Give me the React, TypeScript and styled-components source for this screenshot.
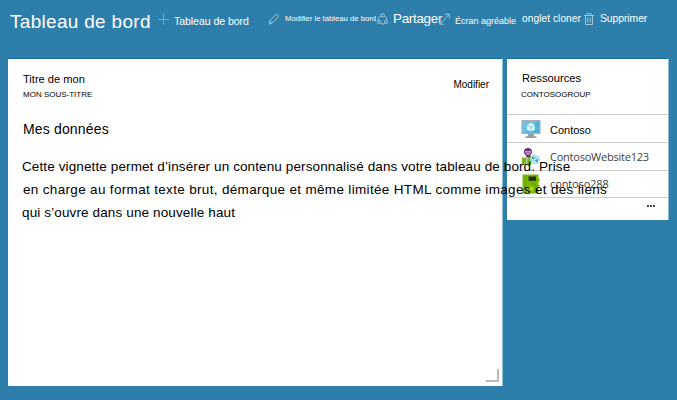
import React from "react";
import styled, { createGlobalStyle } from "styled-components";

const GlobalStyle = createGlobalStyle`
  * { box-sizing: border-box; }
  html, body { margin: 0; padding: 0; background: #2e7eab; }
  body { width: 677px; height: 400px; overflow: hidden; font-family: "Liberation Sans", Arial, sans-serif; }
`;

const Page = styled.main`
  width: 677px;
  height: 400px;
  background: #2e7eab;
`;

const Toolbar = styled.header`
  display: flex;
  align-items: flex-start;
  height: 58px;
  padding: 8px 0 0 10px;
  color: #fff;
`;

const Label = styled.span<{ $size: number; $track?: number }>`
  display: block;
  white-space: nowrap;
  font-size: ${(p) => p.$size}px;
  letter-spacing: ${(p) => p.$track ?? 0}px;
  line-height: 16px;
`;

const Title = styled.h1`
  flex: 0 0 148px;
  margin: 0;
  font-size: 19px;
  font-weight: 400;
  line-height: 27px;
  letter-spacing: 0.3px;
  white-space: nowrap;
`;

const Command = styled.div<{ $width: number; $top: number; $gap: number }>`
  display: flex;
  flex: 0 0 ${(p) => p.$width}px;
  min-width: 0;
  gap: ${(p) => p.$gap}px;
  align-items: flex-start;
  ${Label} { margin-top: ${(p) => p.$top}px; }
`;

const Glyph = styled.svg<{ $top?: number }>`
  display: block;
  flex: none;
  margin-top: ${(p) => p.$top ?? 5}px;
  fill: none;
  stroke: #9fc5da;
  stroke-width: 1;
`;

const Board = styled.div`
  display: grid;
  grid-template-columns: 495px 162px;
  column-gap: 4px;
  align-items: start;
  padding-left: 8px;
`;

const Tile = styled.section<{ $height: number }>`
  height: ${(p) => p.$height}px;
  background: #fff;
  color: #000;
  border-top: 1px solid #176c9f;
  border-right: 1px solid #8fbdd6;
`;

const MarkdownTile = styled(Tile)`
  position: relative;
  z-index: 1;
  padding: 12px 13px 0 14px;
`;

const TileHeader = styled.div`
  display: flex;
  justify-content: space-between;
  height: 44px;
`;

const EditLabel = styled(Label)`
  margin: 6px 0 0;
`;

const Heading = styled.h2`
  margin: 4px 0 0 1px;
  font-size: 14px;
  font-weight: 400;
  line-height: 20px;
  letter-spacing: 0.16px;
`;

const Copy = styled.div`
  margin-top: 16px;
`;

const Line = styled.div<{ $indent?: number; $track: number }>`
  padding-left: ${(p) => p.$indent ?? 0}px;
  height: 23px;
  font-size: 13.5px;
  line-height: 23px;
  letter-spacing: ${(p) => p.$track}px;
  white-space: nowrap;
`;

const Titles = styled.div`
  padding-left: 1px;
`;

const Grip = styled.span`
  position: absolute;
  right: 3px;
  bottom: 4px;
  width: 13px;
  height: 13px;
  border: solid #b9b9b9;
  border-width: 0 2px 2px 0;
`;

const ResourceHeader = styled.div`
  display: flex;
  flex-direction: column;
  gap: 1px;
  height: 55px;
  padding: 11px 0 0 14px;
`;

const ResourceTitle = styled(Label)`
  padding-left: 1px;
`;

const Resource = styled.div<{ $height: number }>`
  display: flex;
  align-items: center;
  gap: 8px;
  height: ${(p) => p.$height}px;
  padding-left: 14px;
  border-top: 1px solid #cdcdcd;
`;

const ResourceName = styled(Label)<{ $web?: boolean }>`
  margin-top: ${(p) => (p.$web ? 0 : 2)}px;
  padding-left: 1px;
  color: ${(p) => (p.$web ? "#404040" : "#000")};
  font-family: ${(p) => (p.$web ? '"Open Sans", "Noto Sans", sans-serif' : "inherit")};
`;

const More = styled.div`
  display: flex;
  justify-content: flex-end;
  gap: 1px;
  padding: 7px 13px 0 0;
  border-top: 1px solid #cdcdcd;
`;

const Dot = styled.i`
  width: 2px;
  height: 2px;
  background: #444;
`;

const MonitorIcon = () => (
  <svg width="20" height="20" viewBox="0 0 20 20">
    <rect x=".5" y="1" width="19" height="14" fill="#a8adb0" />
    <rect x="1.7" y="2.2" width="16.6" height="11.6" fill="#48b5dc" />
    <path d="M2 2h14L4 13.7H2z" fill="#69c4e4" />
    <path d="M10 3.7l4 2.2v4.5l-4 2.3-4-2.3V5.9z" fill="#e2f5fb" />
    <path d="M6 6l4 2.3L14 6M10 8.3v4.2" stroke="#55b9dc" fill="none" strokeWidth=".7" />
    <path d="M7 15h6v2.2h2.5V19h-11v-1.8H7z" fill="#979da1" />
  </svg>
);

const WebIcon = () => (
  <svg width="20" height="20" viewBox="0 0 20 20">
    <path d="M1 10.5h4.5V18H1zM6.2 8.5h4V18h-4z" fill="#76b51b" />
    <path d="M4.6 8C1.6 5.6 3 1 7 1s5.4 4.6 2.4 7l-.9 2h-3z" fill="#68217a" />
    <path d="M6.2 8V6.2C4 6.4 4 3.6 5.7 4L7 5.4 8.3 4c1.7-.4 1.7 2.4-.5 2.2V8" stroke="#fff" fill="none" strokeWidth=".8" />
    <circle cx="14" cy="12.3" r="4.8" fill="#8ccfe8" />
    <path d="M10.5 11l5-2.5 2 5.5-4.5 2-2.5-5 7 3" stroke="#fff" strokeWidth=".9" fill="none" />
    <circle cx="12" cy="11" r="1.2" fill="#3999c6" />
    <circle cx="15.8" cy="13.6" r="1.3" fill="#3999c6" />
  </svg>
);

const BoardIcon = () => (
  <svg width="20" height="20" viewBox="0 0 20 20">
    <path d="M1.5 .5h16v4.3h1v3h-1v3h1v3h-1v5.7h-16z" fill="#78b800" />
    <rect x="7.5" y="2.5" width="7.5" height="4.3" fill="#24331b" />
    <path d="M4.5 3v14M11 7v3h3.5v6" stroke="#5d9f06" strokeWidth=".8" fill="none" />
    <rect x="8" y="13" width="4" height="3.5" fill="#b8d432" />
  </svg>
);

export default function App() {
  return (
    <>
      <GlobalStyle />
      <Page>
        <Toolbar>
          <Title>Tableau de bord</Title>
          <Command $width={110} $top={5} $gap={5}>
            <Glyph width="11" height="12" viewBox="0 0 11 12"><path d="M5.5 .5v11M0 6.5h11" opacity=".6" /></Glyph>
            <Label $size={10.6} $track={-0.08}>Tableau de bord</Label>
          </Command>
          <Command $width={109} $top={3} $gap={5}>
            <Glyph width="12" height="12" viewBox="0 0 12 12"><path d="M1 11l1-3.5L8.5 1l2.3 2.2L4.3 10zM2 7.5L4.3 10" /></Glyph>
            <Label $size={7.7}>Modifier le tableau de bord</Label>
          </Command>
          <Command $width={62} $top={3} $gap={5}>
            <Glyph width="11" height="12" viewBox="0 0 11 12">
              <circle cx="5.5" cy="2.2" r="1.7" /><circle cx="2" cy="9" r="1.6" /><circle cx="9" cy="9" r="1.6" />
              <path d="M4 3C2 3.7 1.2 5 1.3 7.3M7 3c2 .7 2.8 2 2.7 4.3M3.5 10.3c1.2.9 2.8.9 4 0" />
            </Glyph>
            <Label $size={13.4} $track={-0.28}>Partager</Label>
          </Command>
          <Command $width={83} $top={5} $gap={5}>
            <Glyph width="11" height="12" viewBox="0 0 11 12"><path d="M.8 11.2L10 1.5M5.8 1.2h4.6v4.6M.8 7.5v3.7h4" /></Glyph>
            <Label $size={9}>Écran agréable</Label>
          </Command>
          <Command $width={62} $top={3} $gap={0}>
            <Label $size={10.2} $track={0.05}>onglet cloner</Label>
          </Command>
          <Command $width={70} $top={3} $gap={6}>
            <Glyph width="10" height="12" viewBox="0 0 10 12"><path d="M0 2.5h10M3 2.5v-2h4v2M1.5 2.5v9h7v-9M3.8 4.5v5M6.2 4.5v5" /></Glyph>
            <Label $size={10.4} $track={-0.08}>Supprimer</Label>
          </Command>
        </Toolbar>

        <Board>
          <MarkdownTile $height={328}>
            <TileHeader>
              <Titles>
                <Label $size={11.1}>Titre de mon</Label>
                <Label $size={8}>MON SOUS-TITRE</Label>
              </Titles>
              <EditLabel $size={10}>Modifier</EditLabel>
            </TileHeader>
            <Heading>Mes données</Heading>
            <Copy>
              <Line $track={0.115}>Cette vignette permet d’insérer un contenu personnalisé dans votre tableau de bord. Prise</Line>
              <Line $track={0.33} $indent={1}>en charge au format texte brut, démarque et même limitée HTML comme images et des liens</Line>
              <Line $track={0.13}>qui s’ouvre dans une nouvelle haut</Line>
            </Copy>
            <Grip />
          </MarkdownTile>

          <Tile $height={162}>
            <ResourceHeader>
              <ResourceTitle $size={11.2}>Ressources</ResourceTitle>
              <Label $size={8}>CONTOSOGROUP</Label>
            </ResourceHeader>
            <Resource $height={28}><MonitorIcon /><ResourceName $size={11}>Contoso</ResourceName></Resource>
            <Resource $height={28}><WebIcon /><ResourceName $web $size={11} $track={-0.23}>ContosoWebsite123</ResourceName></Resource>
            <Resource $height={27}><BoardIcon /><ResourceName $web $size={11} $track={-0.13}>contoso288</ResourceName></Resource>
            <More><Dot /><Dot /><Dot /></More>
          </Tile>
        </Board>
      </Page>
    </>
  );
}
